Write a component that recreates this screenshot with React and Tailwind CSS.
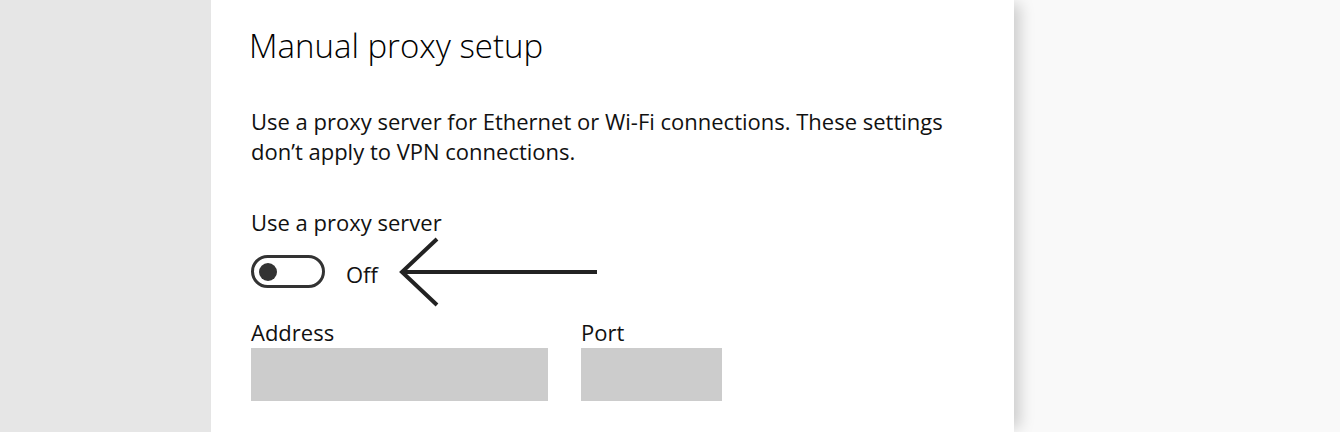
export default function App() {
  return (
    <div className="flex h-[432px] w-full overflow-hidden bg-[#f9f9f9] font-['Open_Sans',sans-serif] text-[#111]">
      <div className="w-[211px] shrink-0 bg-[#e6e6e6]" />
      <main className="relative z-10 w-[803px] shrink-0 bg-white pl-10 shadow-[10px_0_14px_-4px_rgba(0,0,0,0.18)]">
        <h1 className="mt-[24px] -ml-[2px] text-[33px] font-light leading-[44px] text-black">Manual proxy setup</h1>

        <p className="mt-[38px] w-[720px] text-[22px] leading-[30px]">
          Use a proxy server for Ethernet or Wi-Fi connections. These settings don’t apply to VPN connections.
        </p>

        <p className="mt-[42px] text-[22px] leading-[28px]">Use a proxy server</p>

        <div className="relative mt-[19px] flex items-start">
          <span className="flex h-[33px] w-[74px] items-center rounded-full border-[3px] border-[#333]">
            <span className="ml-[5px] h-[18px] w-[18px] rounded-full bg-[#333]" />
          </span>
          <span className="ml-[21px] mt-[5px] text-[22px] leading-[28px]">Off</span>
          <svg className="absolute left-[148px] top-[-19px]" width="200" height="72" viewBox="0 0 200 72" fill="none">
            <path d="M38 3 L3 36 L38 69" stroke="#222" strokeWidth="4" />
            <path d="M3 36 H198" stroke="#222" strokeWidth="4" />
          </svg>
        </div>

        <div className="mt-[30px] flex gap-[33px]">
          <label className="flex flex-col">
            <span className="text-[22px] leading-[28px]">Address</span>
            <span className="mt-[2px] block h-[53px] w-[297px] bg-[#cccccc]" />
          </label>
          <label className="flex flex-col">
            <span className="text-[22px] leading-[28px]">Port</span>
            <span className="mt-[2px] block h-[53px] w-[141px] bg-[#cccccc]" />
          </label>
        </div>
      </main>
      <div className="flex-1" />
    </div>
  );
}
